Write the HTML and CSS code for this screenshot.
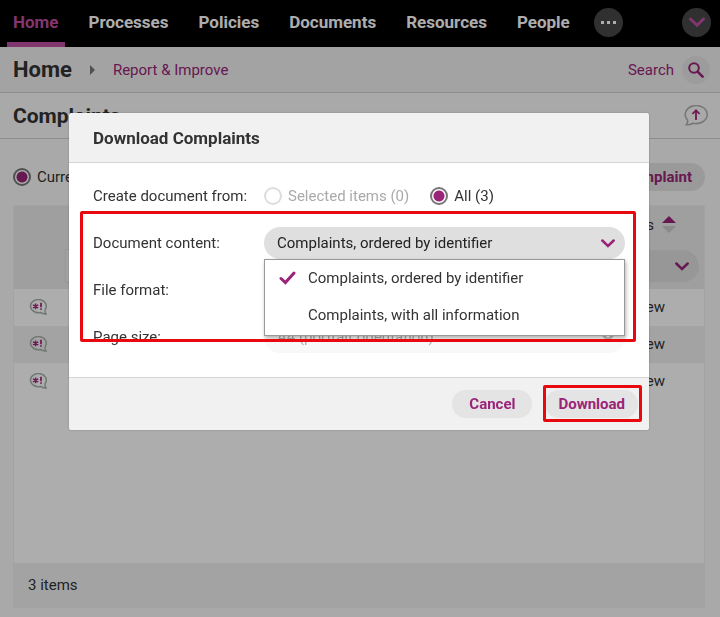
FILE: index.html
```
<!DOCTYPE html>
<html lang="en">
  <head>
    <meta charset="UTF-8" />
    <meta name="viewport" content="width=device-width, initial-scale=1.0" />
    <title>Complaints</title>
    <link rel="stylesheet" href="styles.css" />
  </head>
  <body>
    <svg class="defs" width="0" height="0" aria-hidden="true">
      <symbol id="chevron" viewBox="0 0 14 9">
        <path d="M1.3 1.5 L7 7 L12.7 1.5" fill="none" stroke="currentColor" stroke-width="2.5" stroke-linecap="round" />
      </symbol>
      <symbol id="case" viewBox="0 0 18 16">
        <path d="M16.2 10.4 A7.9 6.5 0 1 0 11.4 13.4 C13 14.6 14.8 15.2 17 15 C16 13.6 15.8 12 16.2 10.4 Z" fill="none" stroke="#a5b1a9" stroke-width="1.5" />
        <path d="M6.6 4.4 V10.2 M4 5.8 L9.2 8.8 M9.2 5.8 L4 8.8" fill="none" stroke="#a2237c" stroke-width="1.4" />
        <path d="M12 3.8 V8.2 M12 9.2 V10.8" stroke="#a2237c" stroke-width="1.7" />
      </symbol>
    </svg>

    <header class="topbar">
      <nav class="menu">
        <a href="#" class="active">Home</a>
        <a href="#">Processes</a>
        <a href="#">Policies</a>
        <a href="#">Documents</a>
        <a href="#">Resources</a>
        <a href="#">People</a>
      </nav>
      <button class="round dots" aria-label="More"><i></i><i></i><i></i></button>
      <button class="round user" aria-label="Account">
        <svg width="16" height="11"><use href="#chevron" /></svg>
      </button>
    </header>

    <div class="crumbs">
      <strong>Home</strong>
      <span class="arrow"></span>
      <a href="#">Report &amp; Improve</a>
      <a href="#" class="search">
        Search
        <span class="search-icon">
          <svg width="16" height="16" viewBox="0 0 16 16">
            <circle cx="6" cy="6" r="4.8" fill="none" stroke="currentColor" stroke-width="2" />
            <path d="M9.6 9.6 L14.6 14.6" stroke="currentColor" stroke-width="2.6" stroke-linecap="round" />
          </svg>
        </span>
      </a>
    </div>

    <div class="titlebar">
      <h1>Complaints</h1>
      <button class="feedback" aria-label="Feedback">
        <svg width="24" height="21" viewBox="0 0 24 21">
          <path d="M3.6 15.2 A11 9 0 1 1 9 18.2 C7 19.4 4.8 19.9 2.4 19.6 C3.6 18.2 3.8 16.8 3.6 15.2 Z" fill="none" stroke="#b0b0b0" stroke-width="1.6" />
          <path d="M12 15 V5.4 M8.4 9 L12 5.2 L15.6 9" fill="none" stroke="#a2237c" stroke-width="1.8" />
        </svg>
      </button>
    </div>

    <main>
      <div class="toolbar">
        <label class="radio"><input type="radio" name="view" checked />Current</label>
        <button class="pill">New complaint</button>
      </div>

      <section class="list">
        <table>
          <thead>
            <tr>
              <th class="icon-col"></th>
              <th></th>
              <th class="status-col">
                <span class="sort">Status <span class="sort-arrows"><i></i><i></i></span></span>
              </th>
            </tr>
            <tr class="filters">
              <td></td>
              <td><input type="text" aria-label="Filter" /></td>
              <td>
                <div class="select">
                  <select aria-label="Status"><option></option></select>
                  <svg width="14" height="9"><use href="#chevron" /></svg>
                </div>
              </td>
            </tr>
          </thead>
          <tbody>
            <tr>
              <td><svg width="18" height="16"><use href="#case" /></svg></td>
              <td></td>
              <td>New</td>
            </tr>
            <tr>
              <td><svg width="18" height="16"><use href="#case" /></svg></td>
              <td></td>
              <td>New</td>
            </tr>
            <tr>
              <td><svg width="18" height="16"><use href="#case" /></svg></td>
              <td></td>
              <td>New</td>
            </tr>
          </tbody>
        </table>
        <footer>3 items</footer>
      </section>
    </main>

    <div class="overlay">
      <form class="dialog" role="dialog" aria-labelledby="dialogTitle">
        <h2 id="dialogTitle">Download Complaints</h2>
        <div class="fields">
          <span>Create document from:</span>
          <div class="radios">
            <label class="radio disabled"><input type="radio" name="source" disabled />Selected items (0)</label>
            <label class="radio"><input type="radio" name="source" checked />All (3)</label>
          </div>

          <label for="content">Document content:</label>
          <div class="select">
            <select id="content">
              <option>Complaints, ordered by identifier</option>
              <option>Complaints, with all information</option>
            </select>
            <svg width="14" height="9"><use href="#chevron" /></svg>
            <ul class="options" role="listbox" aria-label="Document content">
              <li role="option" aria-selected="true">
                <svg width="17" height="14" viewBox="0 0 17 14">
                  <path d="M2 7.5 L6.4 11.6 L15 2" fill="none" stroke="currentColor" stroke-width="3" stroke-linecap="round" />
                </svg>
                Complaints, ordered by identifier
              </li>
              <li role="option">Complaints, with all information</li>
            </ul>
          </div>

          <label for="format">File format:</label>
          <div class="select">
            <select id="format"><option>PDF</option></select>
            <svg width="14" height="9"><use href="#chevron" /></svg>
          </div>

          <label for="size">Page size:</label>
          <div class="select disabled">
            <select id="size" disabled><option>A4 (portrait orientation)</option></select>
            <svg width="14" height="9"><use href="#chevron" /></svg>
          </div>
          <div class="mark mark-fields"></div>
        </div>
        <div class="actions">
          <button type="button" class="pill">Cancel</button>
          <div class="marked">
            <button type="submit" class="pill">Download</button>
            <div class="mark mark-button"></div>
          </div>
        </div>
      </form>
    </div>
  </body>
</html>
```
FILE: styles.css
```
* {
  box-sizing: border-box;
}

body {
  margin: 0;
  min-height: 100vh;
  display: flex;
  flex-direction: column;
  background: #fafafa;
  color: #333;
  font: 15px/20px Roboto, sans-serif;
}

button,
input,
select {
  font: inherit;
  color: inherit;
}

button {
  border: none;
  cursor: pointer;
}

a {
  color: #9a2478;
  text-decoration: none;
}

.defs {
  position: absolute;
}

/* top navigation */
.topbar {
  display: flex;
  align-items: center;
  height: 47px;
  padding: 0 9px 2px 7px;
  background: #000;
}

.menu {
  display: flex;
  gap: 18px;
  height: 47px;
  margin: 0 18px -2px 0;
}

.menu a {
  padding: 12px 6px 0;
  border-bottom: 5px solid transparent;
  color: #fff;
  font-size: 17px;
  font-weight: bold;
}

.menu .active {
  color: #c050a5;
  border-color: #c050a5;
}

.round {
  display: flex;
  align-items: center;
  justify-content: center;
  width: 29px;
  height: 29px;
  padding: 0;
  border-radius: 50%;
  background: #484848;
}

.dots {
  gap: 3px;
}

.dots i {
  width: 3px;
  height: 3px;
  background: #fff;
}

.user {
  margin-left: auto;
  color: #c050a5;
}

.crumbs,
.titlebar {
  display: flex;
  align-items: center;
  height: 46px;
  padding: 0 12px 0 13px;
  border-bottom: 1px solid #d0d0d0;
}

.crumbs {
  background: #f0f0f0;
  padding-right: 10px;
}

.crumbs strong {
  font-size: 22px;
}

.arrow {
  margin: 0 18px;
  border: 5px solid transparent;
  border-left-color: #777;
  border-right: none;
}

.search {
  display: flex;
  align-items: center;
  gap: 8px;
  margin-left: auto;
}

.search-icon {
  display: flex;
  align-items: center;
  justify-content: center;
  width: 28px;
  height: 28px;
  border-radius: 50%;
  background: #e6e6e6;
}

.titlebar h1 {
  margin: 0;
  font-size: 21px;
}

.feedback {
  display: flex;
  margin-left: auto;
  padding: 0;
  background: none;
}

main {
  flex: 1;
  display: flex;
  flex-direction: column;
  padding: 24px 15px 9px 13px;
}

.toolbar {
  display: flex;
  align-items: center;
  justify-content: space-between;
  margin-bottom: 14px;
}

.pill {
  min-width: 80px;
  height: 28px;
  padding: 0 13px;
  border-radius: 14px;
  background: #e4e4e4;
  color: #9a2478;
  font-weight: bold;
}

.radio {
  display: flex;
  align-items: center;
  gap: 6px;
}

.radio input {
  appearance: none;
  width: 18px;
  height: 18px;
  margin: 0;
  border: 2px solid #777;
  border-radius: 50%;
  background: #fff;
}

.radio input:checked {
  background: radial-gradient(circle, #9a2478 5px, #fff 6px);
}

.radio.disabled {
  color: #aaa;
}

.radio.disabled input {
  border-color: #ddd;
}

/* complaints table */
.list {
  flex: 1;
  display: flex;
  flex-direction: column;
  border: 1px solid #f0f0f0;
  background: #fff;
}

table {
  width: 100%;
  border-collapse: collapse;
  table-layout: fixed;
}

thead {
  background: #eaeaea;
}

th,
td {
  height: 37px;
  padding: 0 5px;
  text-align: left;
  font-weight: normal;
}

.icon-col {
  width: 46px;
}

.status-col {
  width: 110px;
}

thead td {
  height: 46px;
}

tbody td {
  padding-bottom: 1px;
}

tbody td:first-child {
  padding-left: 15px;
}

tbody td:last-child {
  padding-left: 41px;
}

tbody tr:nth-child(even) {
  background: #f0f0f0;
}

td svg {
  display: block;
}

.sort {
  display: flex;
  align-items: center;
  gap: 8px;
  padding-left: 12px;
}

.sort-arrows {
  display: grid;
  gap: 3px;
}

.sort-arrows i {
  border: 7px solid transparent;
  border-top: none;
  border-bottom-color: #9a2478;
}

.sort-arrows i:last-child {
  border-top: 7px solid #ccc;
  border-bottom: none;
}

.filters input {
  width: 100%;
  height: 34px;
  border: 1px solid #ddd;
  background: #f0f0f0;
}

.list footer {
  margin-top: auto;
  padding: 12px 14px;
  background: #f0f0f0;
}

.select {
  position: relative;
  color: #9a2478;
}

.select select {
  display: block;
  appearance: none;
  width: 100%;
  height: 32px;
  padding: 0 36px 0 13px;
  border: none;
  border-radius: 16px;
  background: #dfdfdf;
  color: #222;
}

.select > svg {
  position: absolute;
  right: 10px;
  top: 12px;
  pointer-events: none;
}

.select.disabled {
  color: #bbb;
}

.select.disabled select {
  background: #f8f8f8;
  color: #aaa;
  opacity: 1;
}

/* dialog */
.overlay {
  position: fixed;
  inset: 0;
  padding: 113px 2px 0 0;
  background: rgba(0, 0, 0, 0.32);
}

.dialog {
  width: 90%;
  max-width: 580px;
  margin: 0 auto;
  border-radius: 3px;
  background: #fff;
  box-shadow: 0 0 2px rgba(0, 0, 0, 0.3);
}

.dialog h2 {
  margin: 0;
  padding: 15px 24px 14px;
  border-bottom: 1px solid #d4d4d4;
  border-radius: 3px 3px 0 0;
  background: #f1f1f1;
  font-size: 17px;
}

.fields {
  position: relative;
  display: grid;
  grid-template-columns: 156px 1fr;
  grid-auto-rows: 32px;
  gap: 15px;
  align-items: center;
  padding: 17px 24px 24px;
}

.radios {
  display: flex;
  gap: 21px;
}

.options {
  position: absolute;
  z-index: 1;
  top: 100%;
  left: 0;
  right: 0;
  margin: 0;
  padding: 0 0 1px;
  list-style: none;
  border: 1px solid #999;
  background: #fff;
  color: #333;
  box-shadow: 1px 2px 4px rgba(0, 0, 0, 0.3);
}

.options li {
  display: flex;
  align-items: center;
  gap: 12px;
  height: 37px;
  padding: 0 0 1px 43px;
}

.options [aria-selected] {
  padding-left: 14px;
}

.options svg {
  color: #9a2478;
}

.actions {
  display: flex;
  justify-content: flex-end;
  gap: 13px;
  padding: 12px 11px;
  border-top: 1px solid #d4d4d4;
  border-radius: 0 0 3px 3px;
  background: #f1f1f1;
}

.marked {
  position: relative;
}

/* highlight frames */
.mark {
  position: absolute;
  z-index: 2;
  border: 3px solid #e8090e;
  border-radius: 2px;
  pointer-events: none;
}

.mark-fields {
  inset: 48px 13px 35px 11px;
}

.mark-button {
  inset: -5px -4px -4px -2px;
}
```
